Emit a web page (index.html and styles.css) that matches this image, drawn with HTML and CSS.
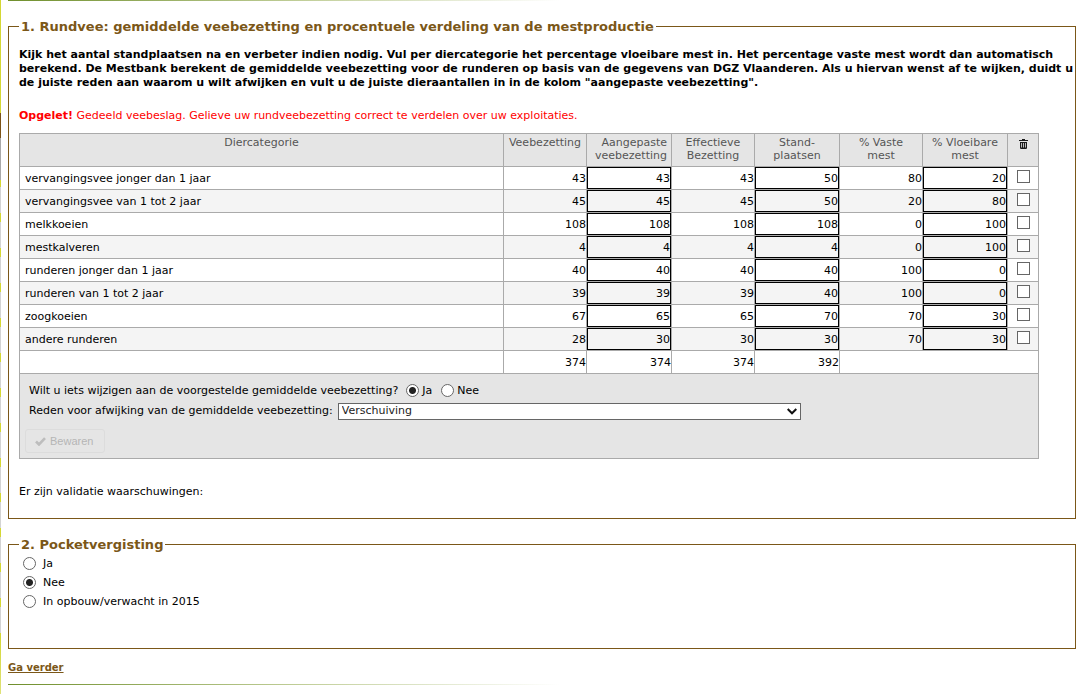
FILE: index.html
```html
<!DOCTYPE html>
<html lang="nl">
<head>
<meta charset="utf-8">
<title>Rundvee</title>
<link rel="stylesheet" href="styles.css">
</head>
<body>
<hr class="rule">
<form class="form">
<fieldset class="section section-cattle">
<legend>1. Rundvee: gemiddelde veebezetting en procentuele verdeling van de mestproductie</legend>
<p class="intro">Kijk het aantal standplaatsen na en verbeter indien nodig. Vul per diercategorie het percentage vloeibare mest in. Het percentage vaste mest wordt dan automatisch berekend. De Mestbank berekent de gemiddelde veebezetting voor de runderen op basis van de gegevens van DGZ Vlaanderen. Als u hiervan wenst af te wijken, duidt u de juiste reden aan waarom u wilt afwijken en vult u de juiste dieraantallen in in de kolom "aangepaste veebezetting".</p>
<p class="warning"><strong>Opgelet!</strong> Gedeeld veebeslag. Gelieve uw rundveebezetting correct te verdelen over uw exploitaties.</p>
<div class="grid">
<table class="cattle">
<colgroup><col><col class="c-narrow"><col class="c-wide"><col class="c-narrow"><col class="c-wide"><col class="c-narrow"><col class="c-wide"><col class="c-check"></colgroup>
<thead>
<tr><th>Diercategorie</th><th>Veebezetting</th><th class="right">Aangepaste veebezetting</th><th>Effectieve Bezetting</th><th>Stand-<br>plaatsen</th><th>% Vaste<br>mest</th><th>% Vloeibare mest</th><th><svg class="trash" viewBox="0 0 9 10" role="img" aria-label="Verwijderen"><path d="M3 0h3v1h3v1H0V1h3zM1 3h7v6.200l-.8.8H1.800L1 9.200z" fill="#1a1a1a"/><path d="M2.500 4v4.500M4.500 4v4.500M6.500 4v4.500" stroke="#e5e5e5" stroke-width=".8"/></svg></th></tr>
</thead>
<tbody>
<tr><td>vervangingsvee jonger dan 1 jaar</td><td>43</td><td><input type="text" value="43" aria-label="Aangepaste veebezetting"></td><td>43</td><td><input type="text" value="50" aria-label="Standplaatsen"></td><td>80</td><td><input type="text" value="20" aria-label="% Vloeibare mest"></td><td><input type="checkbox" aria-label="Verwijder rij"></td></tr>
<tr><td>vervangingsvee van 1 tot 2 jaar</td><td>45</td><td><input type="text" value="45" aria-label="Aangepaste veebezetting"></td><td>45</td><td><input type="text" value="50" aria-label="Standplaatsen"></td><td>20</td><td><input type="text" value="80" aria-label="% Vloeibare mest"></td><td><input type="checkbox" aria-label="Verwijder rij"></td></tr>
<tr><td>melkkoeien</td><td>108</td><td><input type="text" value="108" aria-label="Aangepaste veebezetting"></td><td>108</td><td><input type="text" value="108" aria-label="Standplaatsen"></td><td>0</td><td><input type="text" value="100" aria-label="% Vloeibare mest"></td><td><input type="checkbox" aria-label="Verwijder rij"></td></tr>
<tr><td>mestkalveren</td><td>4</td><td><input type="text" value="4" aria-label="Aangepaste veebezetting"></td><td>4</td><td><input type="text" value="4" aria-label="Standplaatsen"></td><td>0</td><td><input type="text" value="100" aria-label="% Vloeibare mest"></td><td><input type="checkbox" aria-label="Verwijder rij"></td></tr>
<tr><td>runderen jonger dan 1 jaar</td><td>40</td><td><input type="text" value="40" aria-label="Aangepaste veebezetting"></td><td>40</td><td><input type="text" value="40" aria-label="Standplaatsen"></td><td>100</td><td><input type="text" value="0" aria-label="% Vloeibare mest"></td><td><input type="checkbox" aria-label="Verwijder rij"></td></tr>
<tr><td>runderen van 1 tot 2 jaar</td><td>39</td><td><input type="text" value="39" aria-label="Aangepaste veebezetting"></td><td>39</td><td><input type="text" value="40" aria-label="Standplaatsen"></td><td>100</td><td><input type="text" value="0" aria-label="% Vloeibare mest"></td><td><input type="checkbox" aria-label="Verwijder rij"></td></tr>
<tr><td>zoogkoeien</td><td>67</td><td><input type="text" value="65" aria-label="Aangepaste veebezetting"></td><td>65</td><td><input type="text" value="70" aria-label="Standplaatsen"></td><td>70</td><td><input type="text" value="30" aria-label="% Vloeibare mest"></td><td><input type="checkbox" aria-label="Verwijder rij"></td></tr>
<tr><td>andere runderen</td><td>28</td><td><input type="text" value="30" aria-label="Aangepaste veebezetting"></td><td>30</td><td><input type="text" value="30" aria-label="Standplaatsen"></td><td>70</td><td><input type="text" value="30" aria-label="% Vloeibare mest"></td><td><input type="checkbox" aria-label="Verwijder rij"></td></tr>
</tbody>
<tfoot>
<tr><td></td><td>374</td><td>374</td><td>374</td><td>392</td><td colspan="3"></td></tr>
</tfoot>
</table>
<div class="panel">
<div class="line" role="radiogroup" aria-labelledby="change-q">
<span id="change-q" class="question">Wilt u iets wijzigen aan de voorgestelde gemiddelde veebezetting?</span>
<label class="choice"><input type="radio" name="change" checked>Ja</label>
<label class="choice"><input type="radio" name="change">Nee</label>
</div>
<div class="line">
<label for="reason">Reden voor afwijking van de gemiddelde veebezetting:</label>
<span class="select"><select id="reason"><option>Verschuiving</option></select><svg class="chevron" viewBox="0 0 10 7" aria-hidden="true"><path d="M.7 1 5 5.300 9.300 1" fill="none" stroke="#111" stroke-width="2"/></svg></span>
</div>
<button class="save" type="button" disabled><svg class="check" viewBox="0 0 11 9" aria-hidden="true"><path d="M1 4.500 4 7.500 10 1.200" fill="none" stroke="#bdbdbd" stroke-width="2.600"/></svg>Bewaren</button>
</div>
</div>
<p class="validation">Er zijn validatie waarschuwingen:</p>
</fieldset>
<fieldset class="section section-pocket">
<legend>2. Pocketvergisting</legend>
<div class="options">
<label class="option"><input type="radio" name="pocket">Ja</label>
<label class="option"><input type="radio" name="pocket" checked>Nee</label>
<label class="option"><input type="radio" name="pocket">In opbouw/verwacht in 2015</label>
</div>
</fieldset>
</form>
<a class="next" href="#">Ga verder</a>
<hr class="rule">
</body>
</html>
```

FILE: styles.css
```css
* {
  box-sizing: border-box;
}

html {
  min-height: 100%;
  background-color: #fff;
  background-image:
    linear-gradient(#d4d733 113px, #7d5316 113px 138px, #a9a9a9 138px 180px, transparent 180px),
    linear-gradient(transparent 635px, #d4d733 635px, #dfe27a 694px),
    repeating-linear-gradient(#d4d733 0 4px, #d3d3d3 4px 30px, #d4d733 30px 35px);
  background-size: 1px 100%;
  background-repeat: no-repeat;
  background-position: 0 0, 0 0, 0 8px;
}

body {
  margin: 0 7px 0 8px;
  font: 11px/14px Verdana, "DejaVu Sans", sans-serif;
  color: #000;
}

p {
  margin: 0;
}

.rule {
  height: 1px;
  margin: 0;
  border: 0;
  max-width: 552px;
  background: linear-gradient(90deg, #6f8f2c, #c3d09c 55%, #fff);
}

.section {
  min-width: 0;
  margin: 16px 0 0;
  padding: 0 0 0 10px;
  border: 1px solid #7b5718;
}

.section-cattle {
  padding-bottom: 19px;
}

.section-pocket {
  padding-bottom: 39px;
}

legend {
  padding: 2px 2px 0;
  font-size: 13px;
  line-height: 16px;
  font-weight: bold;
  color: #7b5718;
}

.intro {
  padding-top: 13px;
  font-weight: bold;
}

.warning {
  margin: 19px 0 10px;
  color: #f00;
}

.grid {
  margin-right: 36px;
}

.cattle {
  width: 100%;
  table-layout: fixed;
  border-collapse: collapse;
}

.c-narrow {
  width: 83px;
}

.c-wide {
  width: 85px;
}

.c-check {
  width: 31px;
}

.cattle th,
.cattle td {
  border: 1px solid #aaa;
}

.cattle th {
  height: 33px;
  padding: 2px 4px;
  background: #e5e5e5;
  color: #555;
  font-weight: normal;
  line-height: 13px;
  vertical-align: top;
}

.cattle th.right {
  text-align: right;
}

.cattle td {
  height: 23px;
  padding: 2px 0 0;
  text-align: right;
}

.cattle td:has(input) {
  padding: 0;
}

.cattle td:first-child {
  padding-left: 5px;
  text-align: left;
}

.cattle td:last-child {
  text-align: center;
}

.cattle tbody tr:nth-child(even) {
  background: #f4f4f4;
}

.cattle input[type="text"] {
  display: block;
  width: 100%;
  height: 22px;
  padding: 0;
  border: 1px solid #000;
  border-radius: 0;
  background: transparent;
  font: inherit;
  text-align: right;
  color: inherit;
}

.trash {
  width: 9px;
  height: 10px;
  margin-top: 3px;
}

input[type="checkbox"],
input[type="radio"] {
  appearance: none;
  flex: none;
  width: 13px;
  height: 13px;
  margin: 0;
  border: 1px solid #666;
  background: #fff;
}

input[type="checkbox"] {
  display: block;
  margin: 0 auto 3px;
}

input[type="radio"] {
  border-radius: 50%;
}

input[type="radio"]:checked {
  background: radial-gradient(circle, #222 3px, #fff 4px);
}

.panel {
  padding: 7px 5px 5px;
  border: 1px solid #aaa;
  border-top: 0;
  background: #e5e5e5;
}

.line {
  display: flex;
  align-items: center;
  height: 20px;
  padding-left: 4px;
  gap: 5px;
}

.question {
  margin-right: 3px;
}

.choice {
  display: flex;
  align-items: flex-start;
  gap: 3px;
  margin-right: 4px;
}

.select {
  position: relative;
  width: 463px;
}

.select select {
  display: block;
  appearance: none;
  width: 100%;
  height: 17px;
  padding: 0 3px;
  border: 1px solid #666;
  border-radius: 0;
  background: #fff;
  font: inherit;
  color: #222;
}

.chevron {
  position: absolute;
  top: 5px;
  right: 4px;
  width: 10px;
  height: 7px;
  pointer-events: none;
}

.save {
  display: flex;
  align-items: center;
  gap: 4px;
  height: 24px;
  margin-top: 8px;
  padding: 0 11px 0 9px;
  border: 1px solid #dcdcdc;
  border-radius: 3px;
  background: transparent;
  font: 11px "Liberation Sans", Arial, sans-serif;
  color: #b5b5b5;
}

.check {
  width: 11px;
  height: 9px;
}

.validation {
  margin-top: 26px;
}

.options {
  display: flex;
  flex-direction: column;
  align-items: flex-start;
  gap: 5px;
  padding: 4px 0 0 4px;
}

.option {
  display: flex;
  align-items: flex-start;
  gap: 7px;
}

.next {
  display: inline-block;
  margin: 12px 0 9px;
  font-weight: bold;
  font-size: 10px;
  color: #7b5718;
}
```
